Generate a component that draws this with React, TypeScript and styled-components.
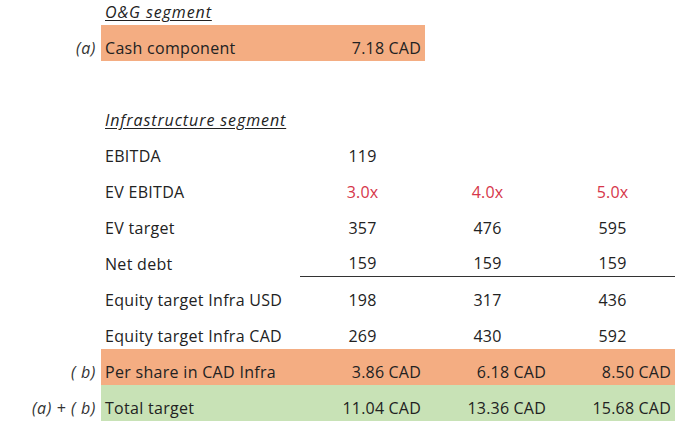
import styled, { createGlobalStyle, css } from 'styled-components';

const GlobalStyle = createGlobalStyle`
  html, body {
    margin: 0;
    padding: 0;
    background: #ffffff;
  }
  body {
    font-family: "Open Sans", Lato, "Liberation Sans", sans-serif;
    color: #222222;
  }
`;

type Tone = 'orange' | 'green' | undefined;

const toneColor = (tone: Tone) =>
    tone === 'orange' ? '#f4ad82' : tone === 'green' ? '#c8e2b6' : 'transparent';

const Sheet = styled.div`
  width: 680px;
  height: 432px;
  overflow: hidden;
  display: flex;
  flex-direction: column;
`;

const Row = styled.div<{ $first?: boolean }>`
  display: grid;
  grid-template-columns: 101px 199px 125px 125px 125px;
  height: ${p => (p.$first ? '25px' : '36px')};
  flex: none;
`;

const Cell = styled.div<{ $tone?: Tone; $rule?: boolean }>`
  display: flex;
  align-items: flex-end;
  padding-bottom: 4px;
  box-sizing: border-box;
  font-size: 16px;
  line-height: 18px;
  white-space: nowrap;
  background: ${p => toneColor(p.$tone)};
  ${p => p.$rule && css`border-bottom: 1.5px solid #333;`}
`;

const Tag = styled(Cell)`
  justify-content: flex-end;
  padding-right: 5px;
  letter-spacing: 0.6px;
  font-style: italic;
  color: #333;
`;

const Label = styled(Cell)`
  padding-left: 4px;
  letter-spacing: 0.3px;
`;

const Heading = styled(Label)`
  letter-spacing: 0.9px;
  font-style: italic;
  text-decoration: underline;
  text-underline-offset: 2px;
`;

const Num = styled(Cell) <{ $red?: boolean; $right?: boolean }>`
  justify-content: ${p => (p.$right ? 'flex-end' : 'center')};
  padding-right: ${p => (p.$right ? '4px' : '0')};
  letter-spacing: 0.2px;
  color: ${p => (p.$red ? '#d6364a' : '#222')};
`;

type Line = { label: string; values: string[]; red?: boolean; rule?: boolean };

const lines: Line[] = [
    { label: 'EBITDA', values: ['119', '', ''] },
    { label: 'EV EBITDA', values: ['3.0x', '4.0x', '5.0x'], red: true },
    { label: 'EV target', values: ['357', '476', '595'] },
    { label: 'Net debt', values: ['159', '159', '159'], rule: true },
    { label: 'Equity target Infra USD', values: ['198', '317', '436'] },
    { label: 'Equity target Infra CAD', values: ['269', '430', '592'] },
];

const totals = [
    { tag: '( b)', label: 'Per share in CAD Infra', values: ['3.86 CAD', '6.18 CAD', '8.50 CAD'], tone: 'orange' as Tone },
    { tag: '(a) + ( b)', label: 'Total target', values: ['11.04 CAD', '13.36 CAD', '15.68 CAD'], tone: 'green' as Tone },
];

export default function App() {
    return (
        <>
            <GlobalStyle />
            <Sheet>
                <Row $first>
                    <Tag />
                    <Heading>O&amp;G segment</Heading>
                </Row>
                <Row>
                    <Tag>(a)</Tag>
                    <Label $tone="orange">Cash component</Label>
                    <Num $tone="orange" $right>7.18 CAD</Num>
                </Row>
                <Row />
                <Row>
                    <Tag />
                    <Heading>Infrastructure segment</Heading>
                </Row>
                {lines.map(line => (
                    <Row key={line.label}>
                        <Tag />
                        <Label>{line.label}</Label>
                        {line.values.map((v, i) => (
                            <Num key={i} $red={line.red} $rule={line.rule}>{v}</Num>
                        ))}
                    </Row>
                ))}
                {totals.map(t => (
                    <Row key={t.label}>
                        <Tag>{t.tag}</Tag>
                        <Label $tone={t.tone}>{t.label}</Label>
                        {t.values.map((v, i) => (
                            <Num key={i} $tone={t.tone} $right>{v}</Num>
                        ))}
                    </Row>
                ))}
            </Sheet>
        </>
    );
}
